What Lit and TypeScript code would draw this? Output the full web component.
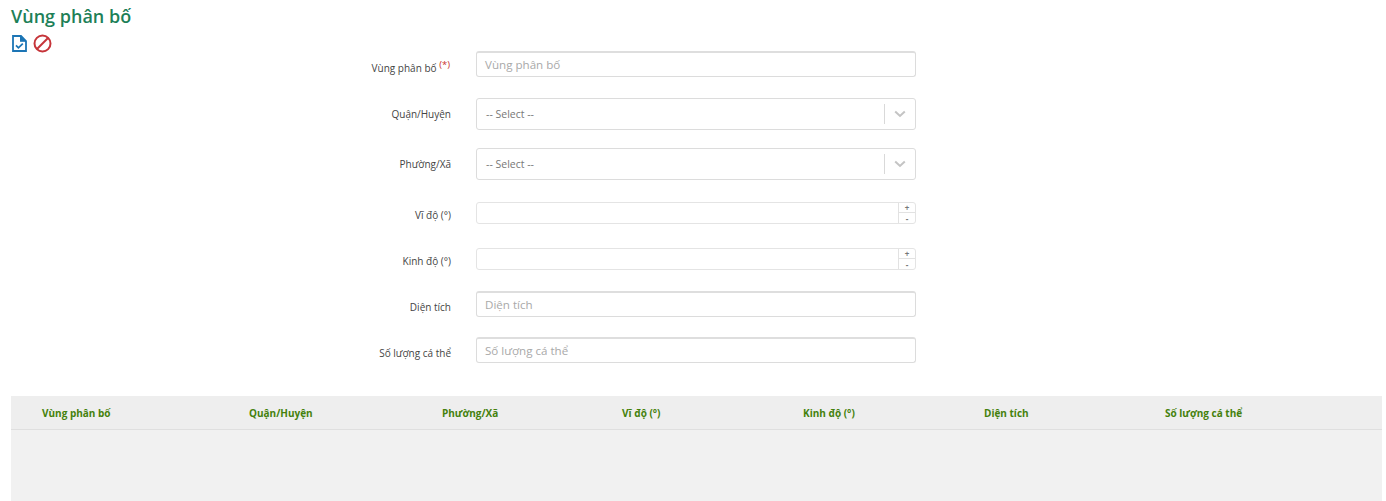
import { LitElement, html, css } from "lit";
import { customElement } from "lit/decorators.js";

type Field = { label: string; kind: "text" | "select" | "number"; placeholder?: string; req?: boolean; cls: string };

const FIELDS: Field[] = [
  { label: "Vùng phân bố", kind: "text", placeholder: "Vùng phân bố", req: true, cls: "r1" },
  { label: "Quận/Huyện", kind: "select", cls: "r2" },
  { label: "Phường/Xã", kind: "select", cls: "r3" },
  { label: "Vĩ độ (°)", kind: "number", cls: "r4" },
  { label: "Kinh độ (°)", kind: "number", cls: "r5" },
  { label: "Diện tích", kind: "text", placeholder: "Diện tích", cls: "r6" },
  { label: "Số lượng cá thể", kind: "text", placeholder: "Số lượng cá thể", cls: "r7" },
];

const COLS = ["Vùng phân bố", "Quận/Huyện", "Phường/Xã", "Vĩ độ (°)", "Kinh độ (°)", "Diện tích", "Số lượng cá thể"];

@customElement("app-root")
export class AppRoot extends LitElement {
  static styles = css`
    :host { display: block; width: 1386px; height: 501px; overflow: hidden; background: #fff; font-family: "Open Sans", "Noto Sans", sans-serif; color: #444; }
    header { height: 51px; }
    h1 { margin: 0; padding: 4px 0 0 11px; font-size: 18px; line-height: 24px; font-weight: 600; color: #1d8058; }
    .tools { display: flex; align-items: center; gap: 6px; padding: 6px 0 0 12px; height: 19px; }
    .tools svg { display: block; }
    form { display: flex; flex-direction: column; margin: 0; }
    .row { display: grid; grid-template-columns: 451px 440px; column-gap: 25px; align-items: center; }
    .lbl { text-align: right; font-size: 10px; line-height: 14px; color: #444; position: relative; white-space: nowrap; }
    .lbl.lbl-text { top: 3px; }
    .lbl.lbl-number { top: 2px; }
    .lbl.lbl-req { top: 4px; padding-right: 1px; }
    .lbl sup { color: #c9302c; font-size: 9.5px; line-height: 0; position: relative; top: 0; }
    .ctl { box-sizing: border-box; width: 440px; border: 1px solid #dcdcdc; border-radius: 3px; background: #fff; display: flex; align-items: center; }
    .text { height: 26px; border-top: 2px solid #dedede; padding-left: 8px; font-size: 11.6px; color: #a9a9a9; }
    .sel { height: 32px; padding-left: 9px; font-size: 10.5px; color: #777; justify-content: space-between; }
    .sel .arrow { display: flex; align-items: center; height: 20px; border-left: 1px solid #d9d9d9; padding: 0 9px; }
    .num { height: 22px; justify-content: flex-end; border-color: #e4e4e4; }
    .spin { width: 17px; height: 20px; border-left: 1px solid #e2e2e2; display: grid; grid-template-rows: 10px 10px; font-size: 8px; font-weight: 700; color: #777; text-align: center; box-sizing: border-box; }
    .spin span { display: block; height: 10px; line-height: 12px; box-sizing: border-box; }
    .spin span:first-child { border-bottom: 1px solid #e2e2e2; line-height: 9px; }
    .r1 { margin-top: 0; }
    .r2 { margin-top: 21px; }
    .r3 { margin-top: 18px; }
    .r4 { margin-top: 22px; }
    .r5 { margin-top: 24px; }
    .r6 { margin-top: 21px; }
    .r7 { margin-top: 20px; }
    .table { margin: 33px 4px 0 11px; background: #f1f1f1; height: 105px; }
    .thead { display: grid; grid-template-columns: 207px 193px 180px 181px 181px 181px 1fr; height: 33px; align-items: center; background: #eeeeee; border-bottom: 1px solid #dfdfdf; }
    .thead div { padding-left: 31px; font-size: 10px; font-weight: 700; color: #44810c; white-space: nowrap; }
  `;

  renderControl(f: Field) {
    if (f.kind === "text") return html`<div class="ctl text">${f.placeholder}</div>`;
    if (f.kind === "select")
      return html`<div class="ctl sel"><span>-- Select --</span><span class="arrow">
        <svg width="12" height="8" viewBox="0 0 12 8"><path d="M1.2 1.5 6 6l4.8-4.5" fill="none" stroke="#c4c4c4" stroke-width="2"/></svg>
      </span></div>`;
    return html`<div class="ctl num"><div class="spin"><span>+</span><span>-</span></div></div>`;
  }

  render() {
    return html`
      <header>
        <h1>Vùng phân bố</h1>
        <div class="tools">
          <svg width="15" height="17" viewBox="0 0 15 17">
            <path d="M1 1h8L14 6v10H1z" fill="#fff" stroke="#1c75b5" stroke-width="1.8"/>
            <path d="M8.6 1v5.2H14" fill="#1c75b5" stroke="#1c75b5" stroke-width="1.2"/>
            <path d="M4 10.4l2.4 2.4L10.8 8.6" fill="none" stroke="#1c75b5" stroke-width="1.8"/>
          </svg>
          <svg width="19" height="19" viewBox="0 0 19 19">
            <circle cx="9.5" cy="9.5" r="8" fill="none" stroke="#c6353a" stroke-width="2"/>
            <path d="M4 15 15 4" stroke="#c6353a" stroke-width="2"/>
          </svg>
        </div>
      </header>
      <form>
        ${FIELDS.map(f => html`<div class="row ${f.cls}">
          <div class="lbl lbl-${f.kind} ${f.req ? "lbl-req" : ""}">${f.label}${f.req ? html` <sup>(*)</sup>` : ""}</div>
          ${this.renderControl(f)}
        </div>`)}
      </form>
      <div class="table">
        <div class="thead">${COLS.map(c => html`<div>${c}</div>`)}</div>
      </div>
    `;
  }
}
